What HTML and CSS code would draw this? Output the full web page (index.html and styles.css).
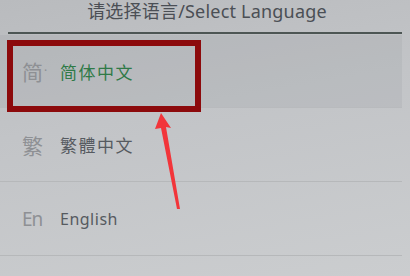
FILE: index.html
```html
<!DOCTYPE html>
<html lang="zh">
<head>
  <meta charset="UTF-8" />
  <title>Select Language</title>
  <link rel="stylesheet" href="styles.css">
</head>
<body>
  <div class="screen">
    <div class="title">请选择语言/Select Language</div>
    <ul class="langs">
      <li class="lang selected">
        <span class="mark">简<i class="dot">·</i></span>
        <span class="name cjk">简体中文</span>
      </li>
      <li class="lang">
        <span class="mark">繁</span>
        <span class="name cjk">繁體中文</span>
      </li>
      <li class="lang">
        <span class="mark en">En</span>
        <span class="name">English</span>
      </li>
    </ul>

    <div class="highlight"></div>
    <svg class="arrow" width="60" height="110" viewBox="0 0 60 110">
      <path d="M20 6 L14 22 L20 21 L36 102 L39 102 L25 20 L30 21 Z" fill="#f2353a"/>
    </svg>
  </div>
</body>
</html>
```

FILE: styles.css
```css
body {
  margin: 0;
  background: #c6c8ca;
  font-family: "Noto Sans", "Noto Sans CJK SC", sans-serif;
}

.screen {
  position: relative;
  width: 410px;
  height: 276px;
  overflow: hidden;
  background: linear-gradient(170deg, #b9bbbe 0%, #c2c4c7 40%, #cbcdcf 100%);
}

.title {
  height: 34px;
  margin: 0 8px;
  padding: 1px 0 0 4px;
  border-bottom: 2px solid #4d5654;
  box-sizing: border-box;
  text-align: center;
  font-size: 18px;
  line-height: 20px;
  color: #4b4f55;
  letter-spacing: 0.2px;
}

.langs {
  list-style: none;
  margin: 0;
  padding: 1px 0 0;
}

.lang {
  display: flex;
  align-items: center;
  height: 73px;
  margin-right: 8px;
  border-bottom: 1px solid #b6b8ba;
  padding-left: 22px;
}

.lang.selected {
  height: 72px;
  background: rgba(160, 162, 166, 0.25);
  border-bottom-color: #b8babd;
}

.mark {
  width: 38px;
  font-size: 21px;
  color: #8e9094;
}

.mark.en {
  font-size: 19px;
  letter-spacing: -1px;
}

.dot {
  font-style: normal;
  font-size: 12px;
  vertical-align: 5px;
  margin-left: 1px;
}

.name {
  font-size: 16px;
  color: #565a60;
  letter-spacing: 0.5px;
}

.name.cjk {
  font-size: 17px;
  letter-spacing: 1.5px;
}

.selected .name {
  color: #2f7a47;
}

.highlight {
  position: absolute;
  left: 7px;
  top: 40px;
  width: 182px;
  height: 60px;
  border: 6px solid #8c0a0c;
}

.arrow {
  position: absolute;
  left: 141px;
  top: 107px;
}
```
